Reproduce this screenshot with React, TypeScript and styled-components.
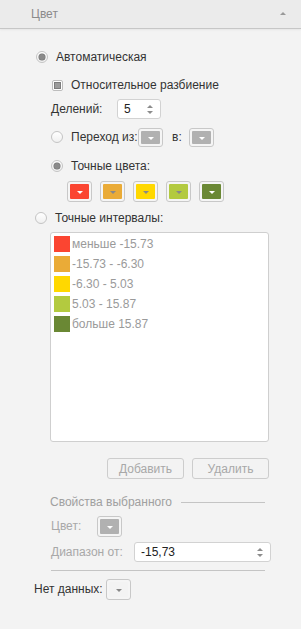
import React from 'react';
import styled, { createGlobalStyle } from 'styled-components';

// #region styles

const GlobalStyle = createGlobalStyle`
  html, body {
    margin: 0;
    padding: 0;
    background: #f3f3f3;
  }
  body {
    font-family: 'Liberation Sans', Arial, sans-serif;
    font-size: 12px;
    color: #333;
  }
`;

const Panel = styled.div`
  width: 301px;
  height: 629px;
  background: #f3f3f3;
  overflow: hidden;
`;

const Header = styled.div`
  display: flex;
  align-items: center;
  height: 28px;
  padding: 0 15px 0 31px;
  background: #ebebeb;
  border-bottom: 1px solid #c6c6c6;
  box-shadow: 0 1px 2px rgba(0, 0, 0, 0.06);
  color: #8a8a8a;
  font-size: 12px;
`;

const HeaderTitle = styled.span`
  flex: 1;
`;

const CollapseArrow = styled.span`
  width: 0;
  height: 0;
  border-left: 3px solid transparent;
  border-right: 3px solid transparent;
  border-bottom: 3px solid #999;
  margin-top: -1px;
`;

const Body = styled.div`
  display: flex;
  flex-direction: column;
  padding-top: 18px;
`;

// $indent – отступ слева, $top – отступ сверху
const Row = styled.div<{ $indent: number; $top?: number }>`
  display: flex;
  align-items: center;
  height: 20px;
  margin-top: ${(p) => p.$top ?? 0}px;
  padding-left: ${(p) => p.$indent}px;
`;

const Radio = styled.span<{ $checked?: boolean }>`
  position: relative;
  box-sizing: border-box;
  width: 12px;
  height: 12px;
  border-radius: 50%;
  border: 1px solid #c4c4c4;
  background: linear-gradient(#fff, #f0f0f0);
  margin-right: 8px;
  flex: none;
  &::after {
    content: '';
    display: ${(p) => (p.$checked ? 'block' : 'none')};
    position: absolute;
    left: 2px;
    top: 2px;
    width: 6px;
    height: 6px;
    border-radius: 50%;
    background: #8a8a8a;
    box-shadow: 0 0 0 0.5px #6e6e6e;
  }
`;

const Checkbox = styled.span`
  box-sizing: border-box;
  width: 11px;
  height: 11px;
  border: 1px solid #bdbdbd;
  border-radius: 2px;
  background: #fff;
  padding: 1px;
  margin-right: 8px;
  flex: none;
  &::after {
    content: '';
    display: block;
    box-sizing: border-box;
    width: 7px;
    height: 7px;
    background: #9c9c9c;
    border: 1px solid #7d7d7d;
  }
`;

const Label = styled.span<{ $muted?: boolean; $width?: number; $pad?: number }>`
  box-sizing: border-box;
  color: ${(p) => (p.$muted ? '#a8a8a8' : '#333')};
  white-space: nowrap;
  padding-left: ${(p) => p.$pad ?? 0}px;
  ${(p) => (p.$width ? `width: ${p.$width}px; flex: none;` : '')}
`;

const Spinner = styled.div<{ $width: number }>`
  box-sizing: border-box;
  display: flex;
  align-items: center;
  width: ${(p) => p.$width}px;
  height: 20px;
  padding: 0 7px 0 6px;
  background: #fff;
  border: 1px solid #d2d2d2;
  border-radius: 3px;
  color: #222;
`;

const SpinnerValue = styled.span`
  flex: 1;
`;

const SpinArrows = styled.span`
  display: flex;
  flex-direction: column;
  gap: 3px;
  &::before,
  &::after {
    content: '';
    width: 0;
    height: 0;
    border-left: 3px solid transparent;
    border-right: 3px solid transparent;
  }
  &::before {
    border-bottom: 3px solid #8c8c8c;
  }
  &::after {
    border-top: 3px solid #8c8c8c;
  }
`;

// Рамка кнопки выбора цвета
const Swatch = styled.span<{ $height?: number }>`
  box-sizing: border-box;
  display: flex;
  width: 25px;
  height: ${(p) => p.$height ?? 21}px;
  padding: 2px;
  border: 1px solid #c8c8c8;
  border-radius: 3px;
  background: #f5f5f5;
  flex: none;
`;

// Заливка кнопки с выпадающим треугольником
const SwatchInner = styled.span<{ $color: string; $arrow: string }>`
  flex: 1;
  display: flex;
  align-items: center;
  justify-content: center;
  background: ${(p) => p.$color};
  border-radius: 1px;
  &::after {
    content: '';
    width: 0;
    height: 0;
    margin-top: 2px;
    border-left: 3px solid transparent;
    border-right: 3px solid transparent;
    border-top: 3px solid ${(p) => p.$arrow};
  }
`;

const SwatchRow = styled.div`
  display: flex;
  gap: 8px;
  padding-left: 67px;
  margin-top: 5px;
`;

const IntervalList = styled.div`
  box-sizing: border-box;
  display: flex;
  flex-direction: column;
  gap: 4px;
  width: 219px;
  height: 210px;
  margin: 4px 0 0 50px;
  padding: 3px;
  background: #fff;
  border: 1px solid #cfcfcf;
  border-radius: 3px;
`;

const IntervalItem = styled.div`
  display: flex;
  align-items: center;
  height: 16px;
  color: #9a9a9a;
  white-space: nowrap;
`;

const IntervalColor = styled.span<{ $color: string }>`
  width: 16px;
  height: 16px;
  margin-right: 2px;
  background: ${(p) => p.$color};
  flex: none;
`;

const ButtonRow = styled.div`
  display: flex;
  justify-content: flex-end;
  gap: 8px;
  width: 269px;
  margin-top: 16px;
`;

const FlatButton = styled.span`
  box-sizing: border-box;
  display: flex;
  align-items: center;
  justify-content: center;
  width: 77px;
  height: 21px;
  border: 1px solid #cdcdcd;
  border-radius: 3px;
  color: #a8a8a8;
`;

const SectionTitle = styled.div`
  display: flex;
  align-items: center;
  gap: 9px;
  width: 215px;
  height: 20px;
  margin: 13px 0 0 50px;
  color: #a0a0a0;
  white-space: nowrap;
  &::after {
    content: '';
    flex: 1;
    height: 1px;
    background: #c4c4c4;
  }
`;

const Divider = styled.div`
  width: 214px;
  height: 1px;
  margin: 8px 0 0 51px;
  background: #c4c4c4;
`;

// #endregion styles

const intervalColors = ['#fb4531', '#eaab37', '#ffd800', '#b3ca3f', '#6a8834'];
const swatchArrows = ['#fff', '#888', '#888', '#888', '#fff'];
const intervals = ['меньше -15.73', '-15.73 - -6.30', '-6.30 - 5.03', '5.03 - 15.87', 'больше 15.87'];

// Серая кнопка выбора цвета (цвет не задан)
const GrayDrop = (props: { height?: number }) => (
  <Swatch $height={props.height ?? 19}>
    <SwatchInner $color="#b1b1b1" $arrow="#fff" />
  </Swatch>
);

// Панель настройки цвета
export default function App() {
  return (
    <Panel>
      <GlobalStyle />
      <Header>
        <HeaderTitle>Цвет</HeaderTitle>
        <CollapseArrow />
      </Header>
      <Body>
        <Row $indent={36}>
          <Radio $checked />
          <Label>Автоматическая</Label>
        </Row>
        <Row $indent={52} $top={8}>
          <Checkbox />
          <Label>Относительное разбиение</Label>
        </Row>
        <Row $indent={51} $top={4}>
          <Label $width={66}>Делений:</Label>
          <Spinner $width={44}>
            <SpinnerValue>5</SpinnerValue>
            <SpinArrows />
          </Spinner>
        </Row>
        <Row $indent={51} $top={8}>
          <Radio />
          <Label $width={67}>Переход из:</Label>
          <GrayDrop />
          <Label $width={26} $pad={9}>
            в:
          </Label>
          <GrayDrop />
        </Row>
        <Row $indent={51} $top={9}>
          <Radio $checked />
          <Label>Точные цвета:</Label>
        </Row>
        <SwatchRow>
          {intervalColors.map((c, k) => (
            <Swatch key={'swatch' + k.toString()}>
              <SwatchInner $color={c} $arrow={swatchArrows[k]} />
            </Swatch>
          ))}
        </SwatchRow>
        <Row $indent={35} $top={6}>
          <Radio />
          <Label>Точные интервалы:</Label>
        </Row>
        <IntervalList>
          {intervals.map((t, k) => (
            <IntervalItem key={'interval' + k.toString()}>
              <IntervalColor $color={intervalColors[k]} />
              {t}
            </IntervalItem>
          ))}
        </IntervalList>
        <ButtonRow>
          <FlatButton>Добавить</FlatButton>
          <FlatButton>Удалить</FlatButton>
        </ButtonRow>
        <SectionTitle>Свойства выбранного</SectionTitle>
        <Row $indent={51} $top={4}>
          <Label $muted $width={46}>
            Цвет:
          </Label>
          <GrayDrop height={21} />
        </Row>
        <Row $indent={51} $top={6}>
          <Label $muted $width={83}>
            Диапазон от:
          </Label>
          <Spinner $width={137}>
            <SpinnerValue>-15,73</SpinnerValue>
            <SpinArrows />
          </Spinner>
        </Row>
        <Divider />
        <Row $indent={34} $top={8}>
          <Label $width={72}>Нет данных:</Label>
          <Swatch $height={21}>
            <SwatchInner $color="#f3f3f3" $arrow="#888" />
          </Swatch>
        </Row>
      </Body>
    </Panel>
  );
}
